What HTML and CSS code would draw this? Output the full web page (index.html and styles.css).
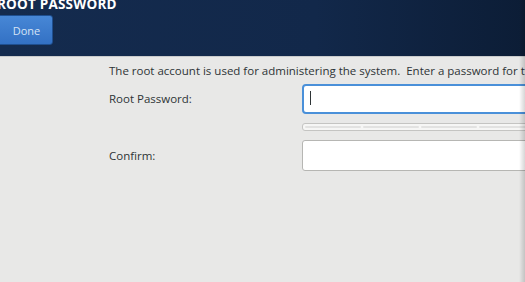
FILE: index.html
```html
<!DOCTYPE html>
<html lang="en">
<head>
    <meta charset="UTF-8"/>
    <title>Root Password</title>
    <link rel="stylesheet" href="styles.css">
</head>
<body>
<header class="topbar">
    <h1 class="title">ROOT PASSWORD</h1>
    <button class="done-btn">Done</button>
</header>
<div class="content">
    <p class="intro">The root account is used for administering the system.&nbsp; Enter a password for the root user.</p>
    <form class="pw-form">
        <label for="pw">Root Password:</label>
        <div class="field">
            <input type="password" id="pw" class="focused">
            <span class="caret"></span>
        </div>

        <span></span>
        <div class="strength">
            <span></span><span></span><span></span><span></span>
        </div>

        <label for="confirm">Confirm:</label>
        <div class="field">
            <input type="password" id="confirm">
        </div>
    </form>
</div>
<div class="edge-shadow"></div>
</body>
</html>
```

FILE: styles.css
```css
body {
    margin: 0;
    width: 525px;
    height: 282px;
    overflow: hidden;
    background-color: #E8E8E7;
    font-family: "Open Sans", sans-serif;
    font-size: 11.5px;
    color: #2E3436;
    position: relative;
}
.topbar {
    display: flex;
    flex-direction: column;
    align-items: flex-start;
    height: 57px;
    box-sizing: border-box;
    background: linear-gradient(to right, #142B4E, #12284A 60%, #0C1D36);
    border-bottom: 1px solid #C9CBCC;
}
.title {
    margin: -5px 0 0 -3px;
    font-size: 13.5px;
    font-weight: bold;
    color: #FFFFFF;
    line-height: 19px;
    letter-spacing: 0.2px;
}
.done-btn {
    display: block;
    margin-top: 1px;
    margin-left: -4px;
    width: 57px;
    height: 30px;
    padding: 0 0 0 4px;
    border: 1px solid #1F4F8F;
    border-radius: 3px;
    background: linear-gradient(to bottom, #4787D6, #3371C4);
    color: #D6E4F5;
    font-family: "Open Sans", sans-serif;
    font-size: 11px;
}
.content {
    padding-left: 109px;
}
.intro {
    margin: 6px 0 0;
    line-height: 16px;
    white-space: nowrap;
}
.pw-form {
    display: grid;
    grid-template-columns: 193px 260px;
    grid-template-rows: 30px 8px 31px;
    row-gap: 9px;
    margin-top: 5px;
    align-items: center;
}
.pw-form label {
    line-height: 16px;
}
.field {
    position: relative;
    height: 100%;
}
.field input {
    width: 100%;
    height: 100%;
    box-sizing: border-box;
    border: 1px solid #B6B6B3;
    border-radius: 3px;
    background: #FFFFFF;
    margin: 0;
}
.field input.focused {
    border: 2px solid #4A90D9;
    border-radius: 4px;
}
.caret {
    position: absolute;
    left: 8px;
    top: 7px;
    width: 1px;
    height: 14px;
    background: #2E3436;
}
.strength {
    height: 8px;
    box-sizing: border-box;
    border: 1px solid #C4C4C2;
    border-radius: 3px;
    background: #F6F6F5;
    display: flex;
    gap: 2px;
    padding: 2px 2px;
}
.strength span {
    flex: 0 0 56px;
    background: #E2E2E1;
    border-radius: 1px;
}
.edge-shadow {
    position: absolute;
    top: 0;
    right: 0;
    width: 6px;
    height: 282px;
    background: linear-gradient(to right, rgba(0,0,0,0), rgba(0,0,0,0.16));
}
```
